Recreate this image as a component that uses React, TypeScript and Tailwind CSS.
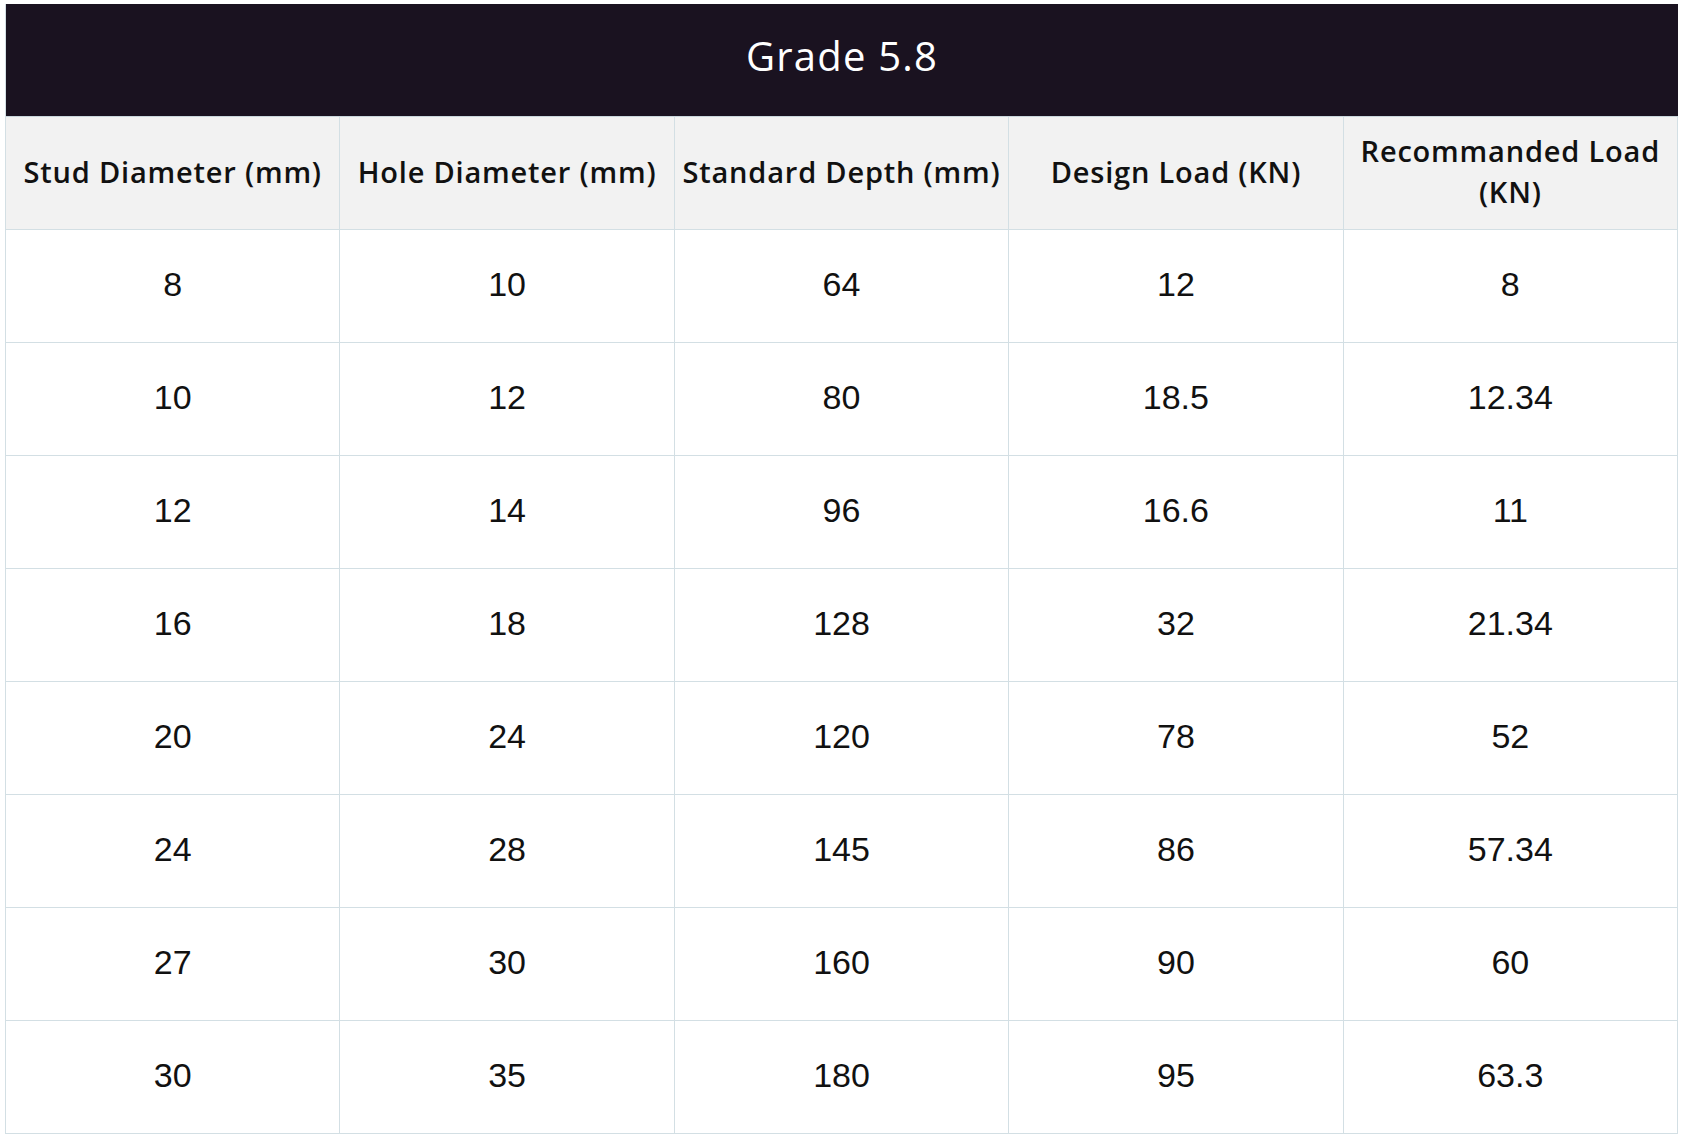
import React from 'react';

const headers = [
  'Stud Diameter (mm)',
  'Hole Diameter (mm)',
  'Standard Depth (mm)',
  'Design Load (KN)',
  'Recommanded Load (KN)',
];

const rows = [
  ['8', '10', '64', '12', '8'],
  ['10', '12', '80', '18.5', '12.34'],
  ['12', '14', '96', '16.6', '11'],
  ['16', '18', '128', '32', '21.34'],
  ['20', '24', '120', '78', '52'],
  ['24', '28', '145', '86', '57.34'],
  ['27', '30', '160', '90', '60'],
  ['30', '35', '180', '95', '63.3'],
];

export default function App() {
  return (
    <div className="min-h-screen bg-white pt-[4px] pl-[5px]">
      <div className="w-[1673px] border-l border-[#d3dfe4]">
        {/* Title */}
        <div className="h-[112px] bg-[#1a1220] flex items-center justify-center pb-[8px]">
          <span className="text-white text-[40px] tracking-[1.2px] font-['Open_Sans',sans-serif]">
            Grade 5.8
          </span>
        </div>

        {/* Header row */}
        <div className="grid grid-cols-5 bg-[#f2f2f2] border-t border-[#c9d6dc]">
          {headers.map((h) => (
            <div
              key={h}
              className="h-[113px] border-r border-b border-[#d3dfe4] flex items-center justify-center text-center px-1 pb-[4px] text-[29px] leading-[41px] tracking-[0.8px] font-semibold text-[#111] font-['Open_Sans',sans-serif]"
            >
              {h === 'Recommanded Load (KN)' ? (
                <span>
                  Recommanded Load
                  <br />
                  (KN)
                </span>
              ) : (
                h
              )}
            </div>
          ))}
        </div>

        {/* Data rows */}
        {rows.map((r, i) => (
          <div key={i} className="grid grid-cols-5">
            {r.map((c, j) => (
              <div
                key={j}
                className="h-[113px] border-r border-b border-[#d3dfe4] flex items-center justify-center pb-[3px] text-[34px] text-[#111] font-['Liberation_Sans',Arial,sans-serif]"
              >
                {c}
              </div>
            ))}
          </div>
        ))}
      </div>
    </div>
  );
}
